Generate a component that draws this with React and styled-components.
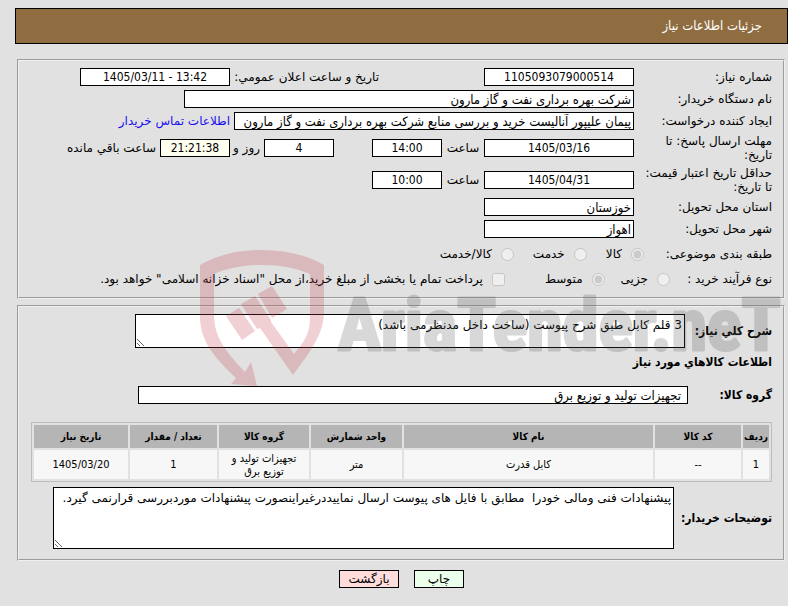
import React from 'react';
import styled, { createGlobalStyle } from 'styled-components';

const GlobalStyle = createGlobalStyle`
  * {
    box-sizing: border-box;
  }
  body {
    margin: 0;
    background: #e1e1e1;
    color: #000;
    font-family: Tahoma, 'DejaVu Sans', sans-serif;
    font-size: 12px;
    line-height: 14px;
  }
`;

const condensed = "Tahoma, 'DejaVu Sans Condensed', 'DejaVu Sans', sans-serif";

const Page = styled.main`
  position: relative;
  direction: rtl;
  padding: 8px 0 16px 15px;
`;
const Header = styled.header`
  display: flex;
  align-items: center;
  height: 36px;
  padding: 0 25px;
  border: 1px solid #000;
  background: #8f6d41;
  color: #fff;
`;
const Title = styled.h1`
  margin: 0;
  font-family: ${condensed};
  font-size: 13px;
  font-weight: normal;
`;
const Panel = styled.section`
  display: flex;
  flex-direction: column;
  gap: 4px;
  margin: ${props => props.$top}px 3px 0 2px;
  padding: 7px 11px ${props => props.$bottom}px 12px;
  border: 2px groove #f0f0f0;
`;
const Row = styled.div`
  display: flex;
  align-items: center;
  gap: 4px;
  min-height: ${props => props.$height || 18}px;
`;
const Label = styled.label`
  flex: none;
  width: ${props => props.$width || 134}px;
  padding-left: 4px;
`;
const BoldLabel = styled.label`
  flex: none;
  width: ${props => props.$width}px;
  font-family: ${condensed};
  font-size: 12px;
  font-weight: bold;
  white-space: nowrap;
`;
const SideLabel = styled.label`
  flex: none;
  width: 145px;
  margin-right: 101px;
  white-space: nowrap;
`;
const Unit = styled.span`
  flex: none;
  width: ${props => props.$width || 34}px;
  text-align: center;
  white-space: nowrap;
`;
const Field = styled.input`
  flex: none;
  width: ${props => props.$width || 150}px;
  height: 18px;
  margin: 0;
  padding: 0 2px;
  border: 1px solid #000;
  border-radius: 0;
  background: ${props => props.$background || '#fff'};
  color: #000;
  font-family: ${condensed};
  font-size: ${props => (props.$center ? 12 : 13)}px;
  text-align: ${props => (props.$center ? 'center' : 'right')};
  direction: ${props => (props.$center ? 'ltr' : 'rtl')};
`;
const DaysField = styled(Field)`
  margin-right: 34px;
`;
const GroupField = styled(Field)`
  padding: 0 6px;
`;
const ContactLink = styled.a`
  color: #1a0ff0;
  text-decoration: none;
`;
const Choice = styled.label`
  display: flex;
  align-items: center;
  gap: 9px;
  margin-left: ${props => props.$after || 0}px;
`;
const Tick = styled.input`
  width: 13px;
  height: 13px;
  margin: 0;
`;
const Notes = styled.textarea`
  flex: none;
  width: ${props => props.$width}px;
  height: ${props => props.$height}px;
  margin: 0;
  padding: 3px 2px;
  border: 1px solid #000;
  border-radius: 0;
  background: #fff;
  color: #000;
  font: inherit;
`;
const Heading = styled.h2`
  margin: 2px 0 12px;
  font-family: ${condensed};
  font-size: 12px;
  line-height: 16px;
`;
const Table = styled.table`
  width: 100%;
  margin: 14px 0 1px;
  border: 1px solid #bdbdbd;
  border-collapse: separate;
  border-spacing: 2px;
  table-layout: fixed;
  text-align: center;
  font-family: ${condensed};
`;
const Col = styled.col`
  width: ${props => (props.$width ? `${props.$width}px` : 'auto')};
`;
const HeadCell = styled.th`
  height: 23px;
  padding: 0;
  background: #b5b5b5;
  font-size: 10px;
  white-space: nowrap;
`;
const Cell = styled.td`
  height: 29px;
  padding: 0 4px;
  background: #f7f7f7;
  font-size: 11px;
  line-height: 13px;
`;
const Actions = styled.footer`
  display: flex;
  justify-content: center;
  gap: 15px;
  margin-top: 9px;
`;
const Button = styled.button`
  width: ${props => props.$width}px;
  height: 18px;
  padding: 0;
  border: 1px solid #000;
  background: ${props => props.$background};
  color: #000;
  font: inherit;
`;
const Watermark = styled.svg`
  position: absolute;
  top: 250px;
  left: 200px;
  pointer-events: none;
`;

const columns = [
  { title: 'ردیف', width: 26 },
  { title: 'کد کالا', width: 86 },
  { title: 'نام کالا' },
  { title: 'واحد شمارش', width: 91 },
  { title: 'گروه کالا', width: 90 },
  { title: 'تعداد / مقدار', width: 87 },
  { title: 'تاریخ نیاز', width: 94 },
];

const items = [
  ['1', '--', 'کابل قدرت', 'متر', 'تجهیزات تولید و توزیع برق', '1', '1405/03/20'],
];

const Logo = () => (
  <Watermark width="588" height="140" aria-hidden="true">
    <g fill="#c03b45" fillOpacity="0.24">
      {/* shield outline, ending in the arrow on the left and the forearm on the right */}
      <path d="M0 15 C18 5 38 0 62 0 C86 0 106 5 124 15 V62 C124 84 110 102 93 125 L60 78 L57 79 L41 54 L55 46 L71 70 L71 72 L94 104 C104 92 110 84 110 68 V24 C96 18 80 15 62 15 C44 15 28 18 14 24 V64 C14 84 22 98 45 122 L51 112 L57 136 L31 134 L36 128 C8 102 0 86 0 66 Z" />
      <path d="M26 66 L39 58 L55 81 L42 90 Z" />
      <path d="M58 44 L72 36 L87 59 L72 68 Z" />
    </g>
    <g opacity="0.22">
      <text
        x="138"
        y="100"
        direction="ltr"
        fill="#505050"
        stroke="#505050"
        strokeWidth="3"
        strokeLinejoin="round"
        fontFamily="'Roboto Condensed', 'Liberation Sans Narrow', Roboto, sans-serif"
        fontSize="72"
        fontWeight="bold"
      >
        AriaTender.neT
      </text>
    </g>
  </Watermark>
);

const App = () => (
  <>
    <GlobalStyle />
    <Page lang="fa">
      <Header>
        <Title>جزئیات اطلاعات نیاز</Title>
      </Header>

      <Panel $top={15} $bottom={9}>
        <Row>
          <Label htmlFor="number">شماره نیاز:</Label>
          <Field id="number" $center readOnly value="1105093079000514" />
          <SideLabel htmlFor="announced">تاریخ و ساعت اعلان عمومي:</SideLabel>
          <Field id="announced" $center readOnly value="1405/03/11 - 13:42" />
        </Row>
        <Row>
          <Label htmlFor="buyer">نام دستگاه خریدار:</Label>
          <Field id="buyer" $width={450} readOnly value="شرکت بهره برداری نفت و گاز مارون" />
        </Row>
        <Row>
          <Label htmlFor="creator">ایجاد کننده درخواست:</Label>
          <Field
            id="creator"
            $width={400}
            readOnly
            value="پیمان علیپور آنالیست خرید و بررسی منابع شرکت بهره برداری نفت و گاز مارون"
          />
          <ContactLink href="#contact">اطلاعات تماس خریدار</ContactLink>
        </Row>
        <Row $height={28}>
          <Label htmlFor="deadline">مهلت ارسال پاسخ: تا تاریخ:</Label>
          <Field id="deadline" $center readOnly value="1405/03/16" />
          <Unit>ساعت</Unit>
          <Field $width={70} $center readOnly aria-label="ساعت ارسال" value="14:00" />
          <DaysField $width={70} $center readOnly aria-label="روز" value="4" />
          <Unit $width={26}>روز و</Unit>
          <Field $width={70} $center $background="#fffff0" readOnly aria-label="زمان باقی" value="21:21:38" />
          <span>ساعت باقي مانده</span>
        </Row>
        <Row $height={28}>
          <Label htmlFor="validity">حداقل تاریخ اعتبار قیمت: تا تاریخ:</Label>
          <Field id="validity" $center readOnly value="1405/04/31" />
          <Unit>ساعت</Unit>
          <Field $width={70} $center readOnly aria-label="ساعت اعتبار" value="10:00" />
        </Row>
        <Row>
          <Label htmlFor="province">استان محل تحویل:</Label>
          <Field id="province" readOnly value="خوزستان" />
        </Row>
        <Row>
          <Label htmlFor="city">شهر محل تحویل:</Label>
          <Field id="city" readOnly value="اهواز" />
        </Row>
        <Row $height={24}>
          <Label as="span" $width={124}>طبقه بندی موضوعی:</Label>
          <Choice $after={15}>
            <Tick type="radio" name="subject" disabled defaultChecked />
            کالا
          </Choice>
          <Choice $after={15}>
            <Tick type="radio" name="subject" disabled />
            خدمت
          </Choice>
          <Choice>
            <Tick type="radio" name="subject" disabled />
            کالا/خدمت
          </Choice>
        </Row>
        <Row>
          <Label as="span" $width={98}>نوع فرآیند خرید :</Label>
          <Choice $after={12}>
            <Tick type="radio" name="process" disabled />
            جزیی
          </Choice>
          <Choice $after={36}>
            <Tick type="radio" name="process" disabled defaultChecked />
            متوسط
          </Choice>
          <Choice>
            <Tick type="checkbox" disabled />
            پرداخت تمام یا بخشی از مبلغ خرید،از محل "اسناد خزانه اسلامی" خواهد بود.
          </Choice>
        </Row>
      </Panel>

      <Panel $top={6} $bottom={10}>
        <Row>
          <BoldLabel htmlFor="summary" $width={83}>شرح کلي نیاز:</BoldLabel>
          <Notes
            id="summary"
            $width={550}
            $height={34}
            readOnly
            value="3 قلم کابل طبق شرح پیوست (ساخت داخل مدنظرمی باشد)"
          />
        </Row>
        <Heading>اطلاعات کالاهاي مورد نیاز</Heading>
        <Row>
          <BoldLabel htmlFor="group" $width={80}>گروه کالا:</BoldLabel>
          <GroupField id="group" $width={550} readOnly value="تجهیزات تولید و توزیع برق" />
        </Row>
        <Table>
          <colgroup>
            {columns.map(column => (
              <Col key={column.title} $width={column.width} />
            ))}
          </colgroup>
          <thead>
            <tr>
              {columns.map(column => (
                <HeadCell key={column.title}>{column.title}</HeadCell>
              ))}
            </tr>
          </thead>
          <tbody>
            {items.map(item => (
              <tr key={item[0]}>
                {item.map((value, index) => (
                  <Cell key={columns[index].title}>{value}</Cell>
                ))}
              </tr>
            ))}
          </tbody>
        </Table>
        <Row>
          <BoldLabel htmlFor="comments" $width={94}>توضیحات خریدار:</BoldLabel>
          <Notes
            id="comments"
            $width={621}
            $height={62}
            readOnly
            value="پیشنهادات فنی ومالی خودرا  مطابق با فایل های پیوست ارسال نماییددرغیراینصورت پیشنهادات موردبررسی قرارنمی گیرد."
          />
        </Row>
      </Panel>

      <Actions>
        <Button $width={50} $background="#ebffeb">چاپ</Button>
        <Button $width={60} $background="#ffdcdc">بازگشت</Button>
      </Actions>
      <Logo />
    </Page>
  </>
);

export default App;
